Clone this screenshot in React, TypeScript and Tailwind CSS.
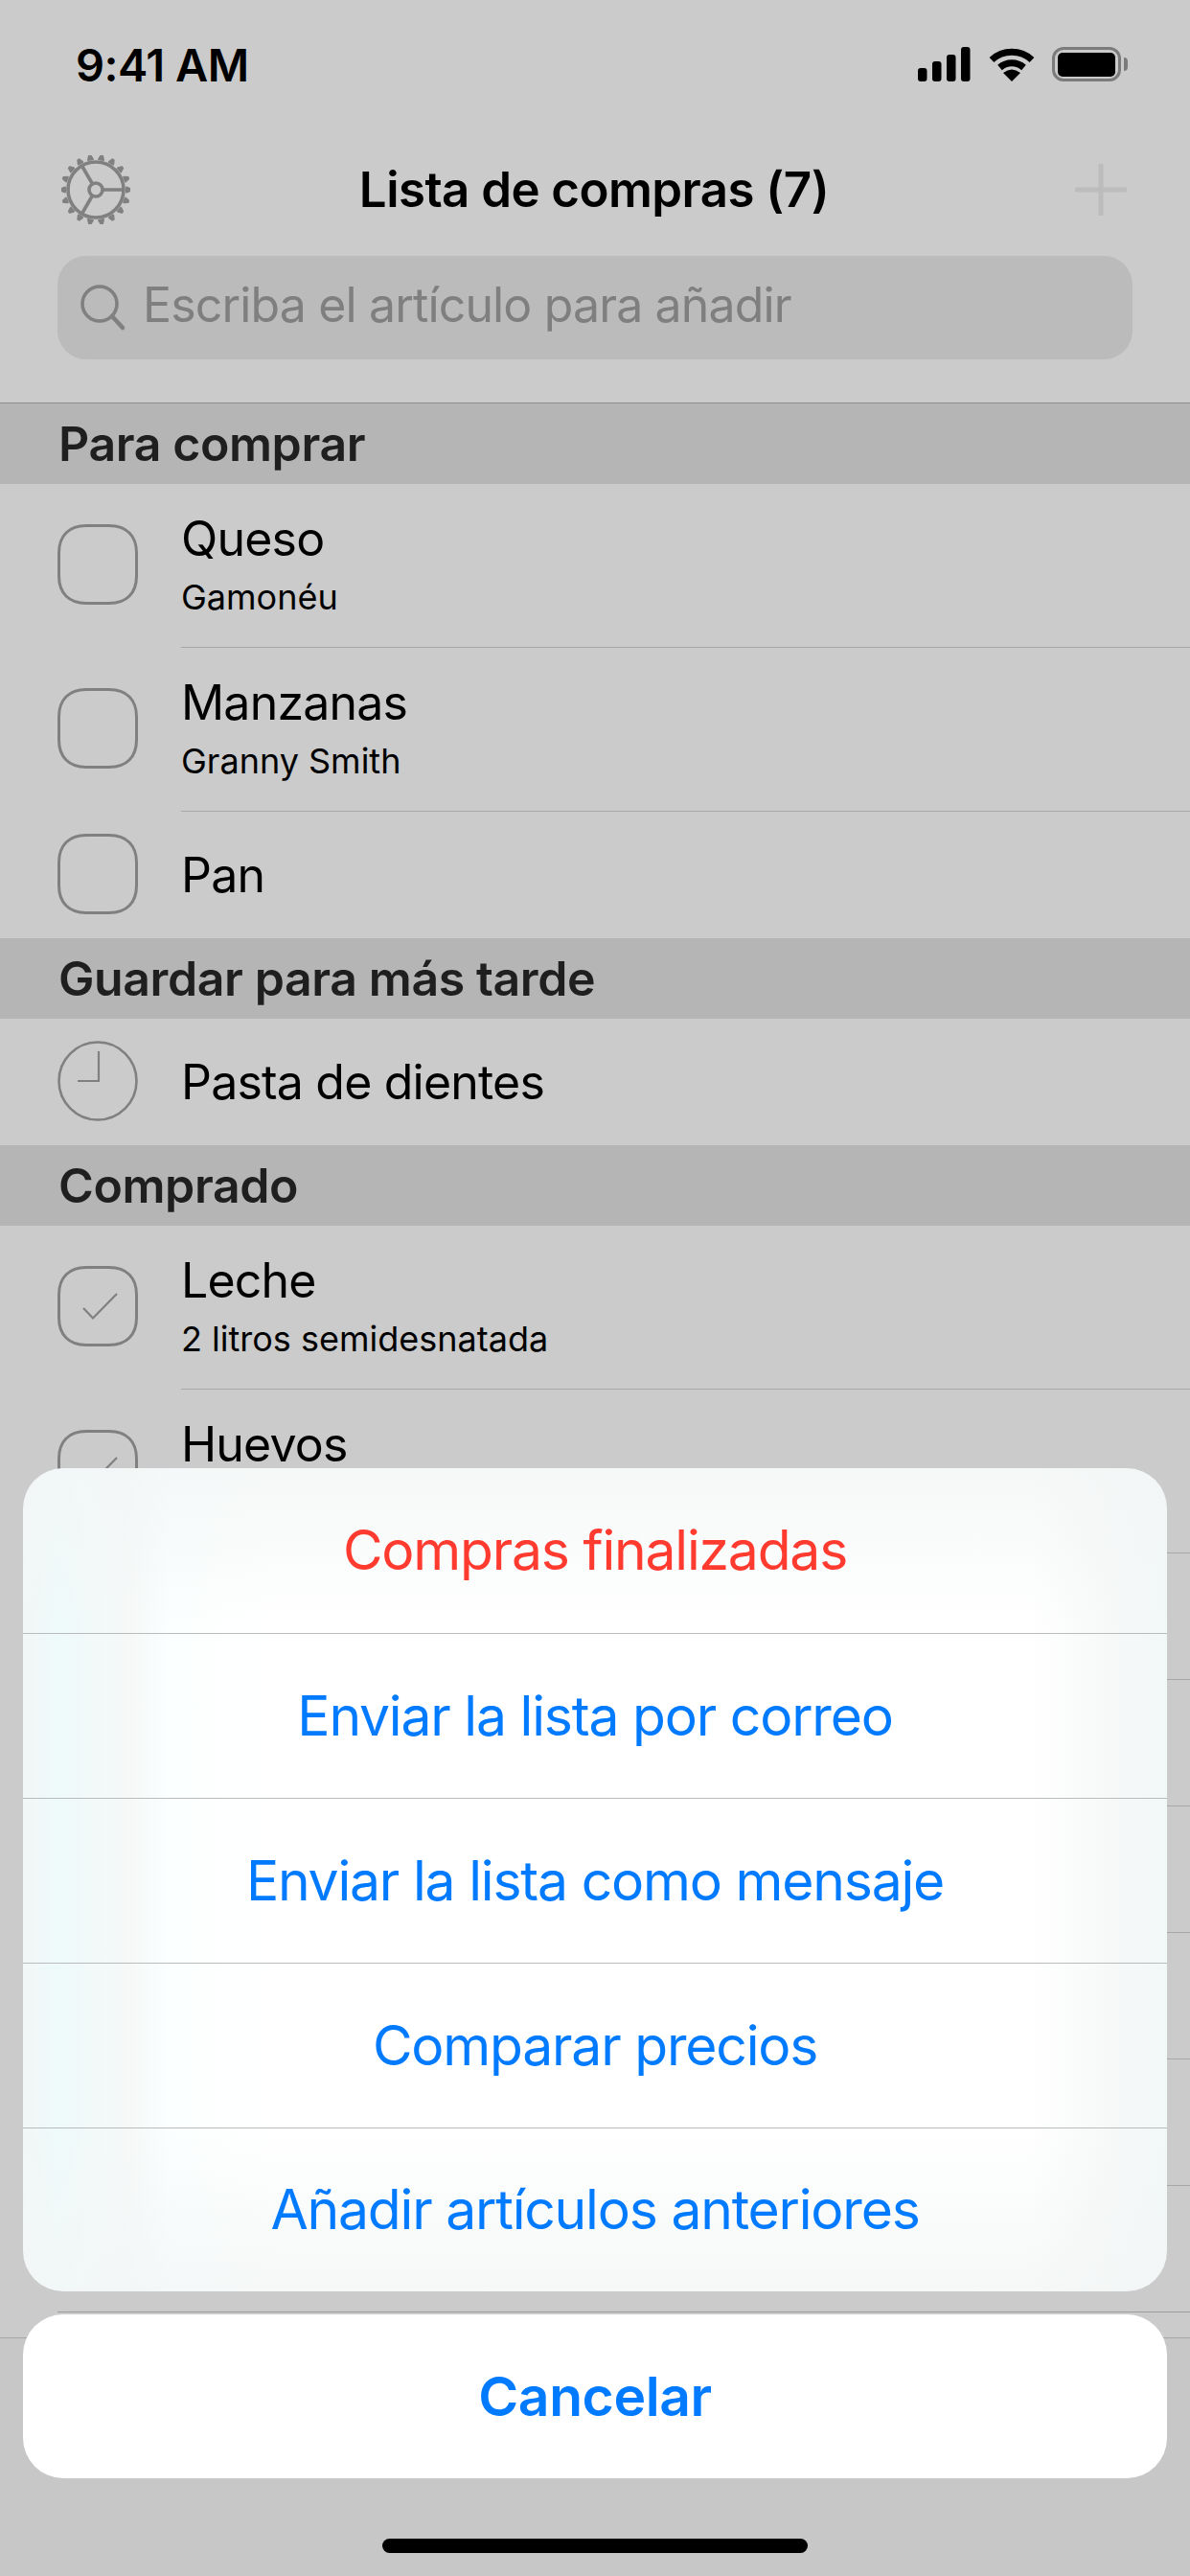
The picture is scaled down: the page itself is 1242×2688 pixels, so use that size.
import React from 'react';

const BOX = 'M30 1.5H54C72 1.5 82.5 12 82.5 30V54C82.5 72 72 82.5 54 82.5H30C12 82.5 1.5 72 1.5 54V30C1.5 12 12 1.5 30 1.5Z';

function CheckBox({ checked = false }: { checked?: boolean }) {
  return (
    <svg width="84" height="84" viewBox="0 0 84 84" fill="none" className="shrink-0">
      <path d={BOX} stroke="#808080" strokeWidth="3" />
      {checked && <path d="M27 44L37 54.5L62 29" stroke="#808080" strokeWidth="2.2" />}
    </svg>
  );
}

function ClockIcon() {
  return (
    <svg width="84" height="84" viewBox="0 0 84 84" fill="none" className="shrink-0">
      <circle cx="42" cy="42" r="40.5" stroke="#808080" strokeWidth="2.6" />
      <path d="M43 11V42H21" stroke="#808080" strokeWidth="2.2" />
    </svg>
  );
}

function GearIcon() {
  const teeth = Array.from({ length: 18 }, (_, i) => i * 20);
  return (
    <svg width="72" height="72" viewBox="0 0 72 72" fill="none">
      {teeth.map(a => (
        <path key={a} d="M68 33.5L72 35.2V36.8L68 38.5Z" fill="#808080" stroke="#808080" strokeWidth="2" strokeLinejoin="round" transform={`rotate(${a} 36 36)`} />
      ))}
      <circle cx="36" cy="36" r="29" stroke="#808080" strokeWidth="3.6" />
      <circle cx="36" cy="36" r="7" stroke="#808080" strokeWidth="3.6" />
      <path d="M43 36H65M32.5 30L21.5 11M32.5 42L21.5 61" stroke="#808080" strokeWidth="3.6" />
    </svg>
  );
}

function SearchIcon() {
  return (
    <svg width="50" height="50" viewBox="0 0 50 50" fill="none" className="shrink-0">
      <circle cx="21" cy="21" r="18" stroke="#808080" strokeWidth="3.6" />
      <path d="M34 34L45 46" stroke="#808080" strokeWidth="4.5" strokeLinecap="round" />
    </svg>
  );
}

function PlusIcon() {
  return (
    <svg width="54" height="54" viewBox="0 0 54 54" fill="none">
      <path d="M27 2V52M2 27H52" stroke="#bcbcbc" strokeWidth="5" strokeLinecap="round" />
    </svg>
  );
}

function StatusIcons() {
  return (
    <div className="flex items-center">
      <svg width="56" height="36" viewBox="0 0 56 36" fill="#000">
        <rect x="0" y="22" width="9.5" height="14" rx="3" />
        <rect x="15" y="15" width="9.5" height="21" rx="3" />
        <rect x="30" y="8" width="9.5" height="28" rx="3" />
        <rect x="45" y="0" width="9.5" height="36" rx="3" />
      </svg>
      <svg width="48" height="36" viewBox="0 0 48 36" fill="none" className="ml-[18px]">
        <path d="M3 13.5A31 31 0 0 1 45 13.5" stroke="#000" strokeWidth="7" />
        <path d="M11.5 21.5A19 19 0 0 1 36.5 21.5" stroke="#000" strokeWidth="7" />
        <path d="M24 36L15 27Q24 20 33 27Z" fill="#000" />
      </svg>
      <div className="ml-[18px] flex items-center">
        <div className="flex h-[36px] w-[72px] items-center justify-center rounded-[12px] border-[3px] border-[#7b7b7b]">
          <div className="h-[25px] w-[60px] rounded-[5px] bg-black" />
        </div>
        <div className="ml-[3px] h-[14px] w-[4px] rounded-r-[4px] bg-[#7b7b7b]" />
      </div>
    </div>
  );
}

function SectionHeader({ title }: { title: string }) {
  return (
    <div className="flex h-[84px] items-center bg-[#b5b5b5] pl-[61px] text-[50px] font-semibold tracking-[-0.4px] text-[#1f1f1f]">
      {title}
    </div>
  );
}

type ItemProps = { name: string; note?: string; icon: React.ReactNode; last?: boolean };

function Item({ name, note, icon, last }: ItemProps) {
  return (
    <div className={`flex pl-[60px] ${note ? 'h-[171px]' : 'h-[132px]'}`}>
      <div className="flex w-[129px] shrink-0 items-center pb-[3px]">{icon}</div>
      <div className={`flex flex-1 flex-col justify-center ${note ? 'pb-[3px]' : ''} ${last ? '' : 'border-b border-[#a8a8a8]'}`}>
        <div className="text-[50px] leading-[60px] tracking-[-0.8px] text-black">{name}</div>
        {note && <div className="mt-[9px] text-[36px] leading-[44px] text-black">{note}</div>}
      </div>
    </div>
  );
}

// filas sin contenido visible: quedan tapadas por la hoja de acciones
function BlankRow() {
  return (
    <div className="h-[132px] pl-[189px]">
      <div className="h-full border-b border-[#a8a8a8]" />
    </div>
  );
}

const ACTIONS = [
  { label: 'Compras finalizadas', color: 'text-[#ff3b30]' },
  { label: 'Enviar la lista por correo', color: 'text-[#007aff]' },
  { label: 'Enviar la lista como mensaje', color: 'text-[#007aff]' },
  { label: 'Comparar precios', color: 'text-[#007aff]' },
  { label: 'Añadir artículos anteriores', color: 'text-[#007aff]' },
];

function ActionSheet() {
  return (
    <div className="absolute left-[24px] right-[24px] top-[1532px] flex flex-col gap-[24px]">
      <div className="flex flex-col overflow-hidden rounded-[42px] bg-[linear-gradient(180deg,rgba(243,246,246,0.75)_0%,rgba(243,246,246,0.4)_10%,rgba(255,255,255,0)_19%,rgba(255,255,255,0)_80%,rgba(243,246,246,0.4)_90%,rgba(243,246,246,0.75)_100%),linear-gradient(90deg,#f2f6f6_0%,#eefafa_3%,#f6f8f8_9%,#fcffff_13%,#ffffff_22%,#ffffff_88%,#f8f9f9_94%,#f2f7f7_100%)]">
        {ACTIONS.map((a, i) => (
          <div key={a.label} className={`flex h-[172px] items-center justify-center text-[57px] tracking-[-1.2px] last:h-[171px] ${a.color} ${i > 0 ? 'border-t border-[#b9bcbc]' : ''}`}>
            {a.label}
          </div>
        ))}
      </div>
      <div className="flex h-[171px] items-center justify-center rounded-[42px] bg-white text-[57px] font-semibold tracking-[-0.4px] text-[#007aff]">
        Cancelar
      </div>
    </div>
  );
}

export default function App() {
  return (
    <div className="relative flex h-[2688px] w-[1242px] flex-col overflow-hidden bg-[#cbcbcb] font-['Inter','Liberation_Sans',sans-serif]">
      <header className="h-[421px] shrink-0 border-b border-[#8e8e8e]">
        <div className="flex h-[134px] items-center justify-between pl-[79px] pr-[65px]">
          <span className="pt-[2px] text-[47px] font-semibold tracking-[-0.5px] text-black">9:41 AM</span>
          <StatusIcons />
        </div>
        <div className="grid h-[128px] grid-cols-[1fr_auto_1fr] items-center pl-[64px] pr-[66px]">
          <GearIcon />
          <h1 className="text-[51px] font-semibold tracking-[-0.55px] text-black">Lista de compras (7)</h1>
          <div className="justify-self-end">
            <PlusIcon />
          </div>
        </div>
        <div className="mx-[60px] mt-[5px] flex h-[108px] items-center gap-[16px] rounded-[30px] bg-[#bbbbbb] pl-[23px]">
          <SearchIcon />
          <span className="pb-[5px] text-[50px] tracking-[-0.85px] text-[#7f7f7f]">Escriba el artículo para añadir</span>
        </div>
      </header>

      <SectionHeader title="Para comprar" />
      <Item name="Queso" note="Gamonéu" icon={<CheckBox />} />
      <Item name="Manzanas" note="Granny Smith" icon={<CheckBox />} />
      <Item name="Pan" icon={<CheckBox />} last />

      <SectionHeader title="Guardar para más tarde" />
      <Item name="Pasta de dientes" icon={<ClockIcon />} last />

      <SectionHeader title="Comprado" />
      <Item name="Leche" note="2 litros semidesnatada" icon={<CheckBox checked />} />
      <Item name="Huevos" note={'\u00a0'} icon={<CheckBox checked />} />
      <BlankRow />
      <BlankRow />
      <BlankRow />
      <BlankRow />
      <BlankRow />
      <div className="ml-[60px] h-[132px] border-b border-[#9c9c9c]" />

      <div className="mt-[26px] flex-1 border-t border-[#a8a8a8] bg-[#c7c7c7]" />

      <ActionSheet />

      <div className="absolute bottom-[24px] left-[399px] h-[15px] w-[444px] rounded-[8px] bg-black" />
    </div>
  );
}
